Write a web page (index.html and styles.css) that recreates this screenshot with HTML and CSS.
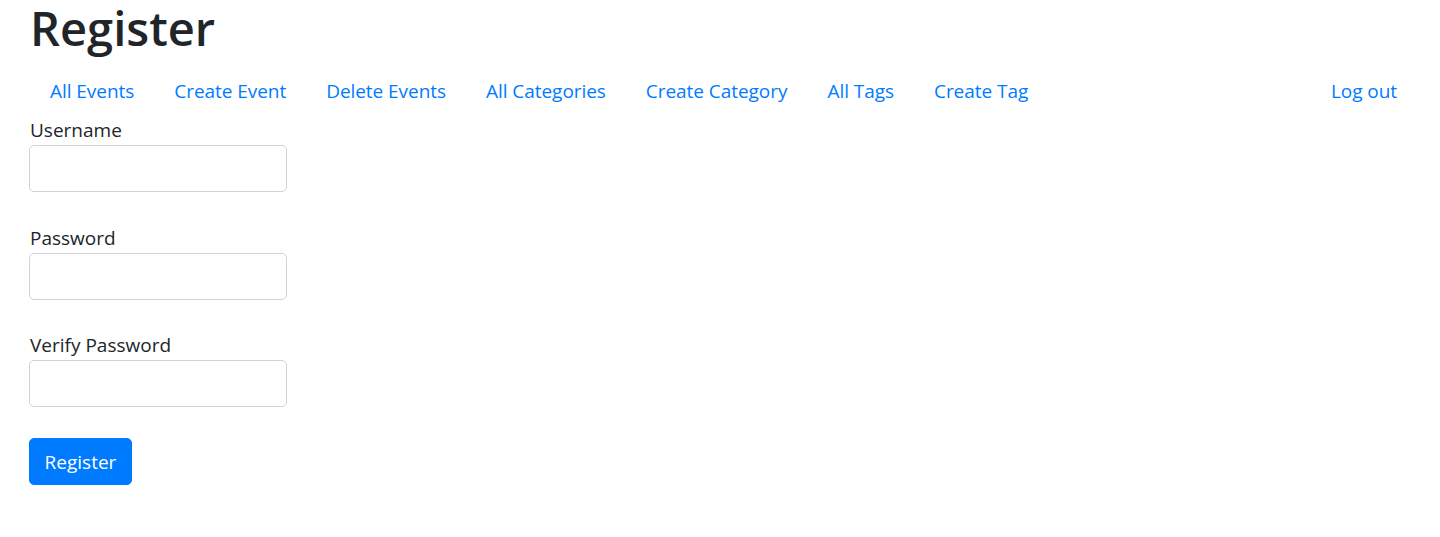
FILE: index.html
```html
<!DOCTYPE html>
<html lang="en">
<head>
<meta charset="utf-8">
<title>Register</title>
<link rel="stylesheet" href="styles.css">
</head>
<body>
<div class="page">
  <h1 class="title">Register</h1>
  <nav class="nav">
    <a class="nav-link" href="#">All Events</a>
    <a class="nav-link" href="#">Create Event</a>
    <a class="nav-link" href="#">Delete Events</a>
    <a class="nav-link" href="#">All Categories</a>
    <a class="nav-link" href="#">Create Category</a>
    <a class="nav-link" href="#">All Tags</a>
    <a class="nav-link" href="#">Create Tag</a>
    <a class="nav-link nav-right" href="#">Log out</a>
  </nav>
  <form class="form">
    <div class="form-group">
      <label class="label" for="username">Username</label>
      <input class="input" id="username" type="text">
    </div>
    <div class="form-group">
      <label class="label" for="password">Password</label>
      <input class="input" id="password" type="password">
    </div>
    <div class="form-group">
      <label class="label" for="verify">Verify Password</label>
      <input class="input" id="verify" type="password">
    </div>
    <button class="btn" type="submit">Register</button>
  </form>
</div>
</body>
</html>
```

FILE: styles.css
```css
html, body {
  margin: 0;
  padding: 0;
  background: #fff;
}
body {
  font-family: "Open Sans", "Noto Sans", sans-serif;
  font-size: 19px;
  line-height: 30px;
  color: #212529;
}
.page {
  padding: 0 23px 0 30px;
}
.title {
  font-size: 47px;
  font-weight: 600;
  line-height: 57px;
  margin: 0 0 8px;
  color: #212529;
}
.nav {
  display: flex;
  letter-spacing: -0.05px;
}
.nav-link {
  display: block;
  padding: 11px 20px 9px;
  color: #007bff;
  text-decoration: none;
  line-height: 30px;
}
.nav-right {
  margin-left: auto;
}
.form {
  display: flex;
  flex-direction: column;
  align-items: flex-start;
}
.form-group {
  display: flex;
  flex-direction: column;
  align-items: flex-start;
  margin-bottom: 30.5px;
}
.label {
  display: block;
  padding-top: 1px;
  line-height: 29px;
}
.input {
  box-sizing: border-box;
  width: 258px;
  height: 47px;
  margin-left: -1px;
  border: 1px solid #ced4da;
  border-radius: 5px;
  background: #fff;
  font: inherit;
  padding: 7px 15px;
}
.btn {
  box-sizing: border-box;
  height: 47px;
  width: 103px;
  margin-left: -1px;
  border: 1px solid #007bff;
  border-radius: 5px;
  background: #007bff;
  color: #fff;
  font: inherit;
  padding: 2px 0 0;
  cursor: pointer;
}
```
